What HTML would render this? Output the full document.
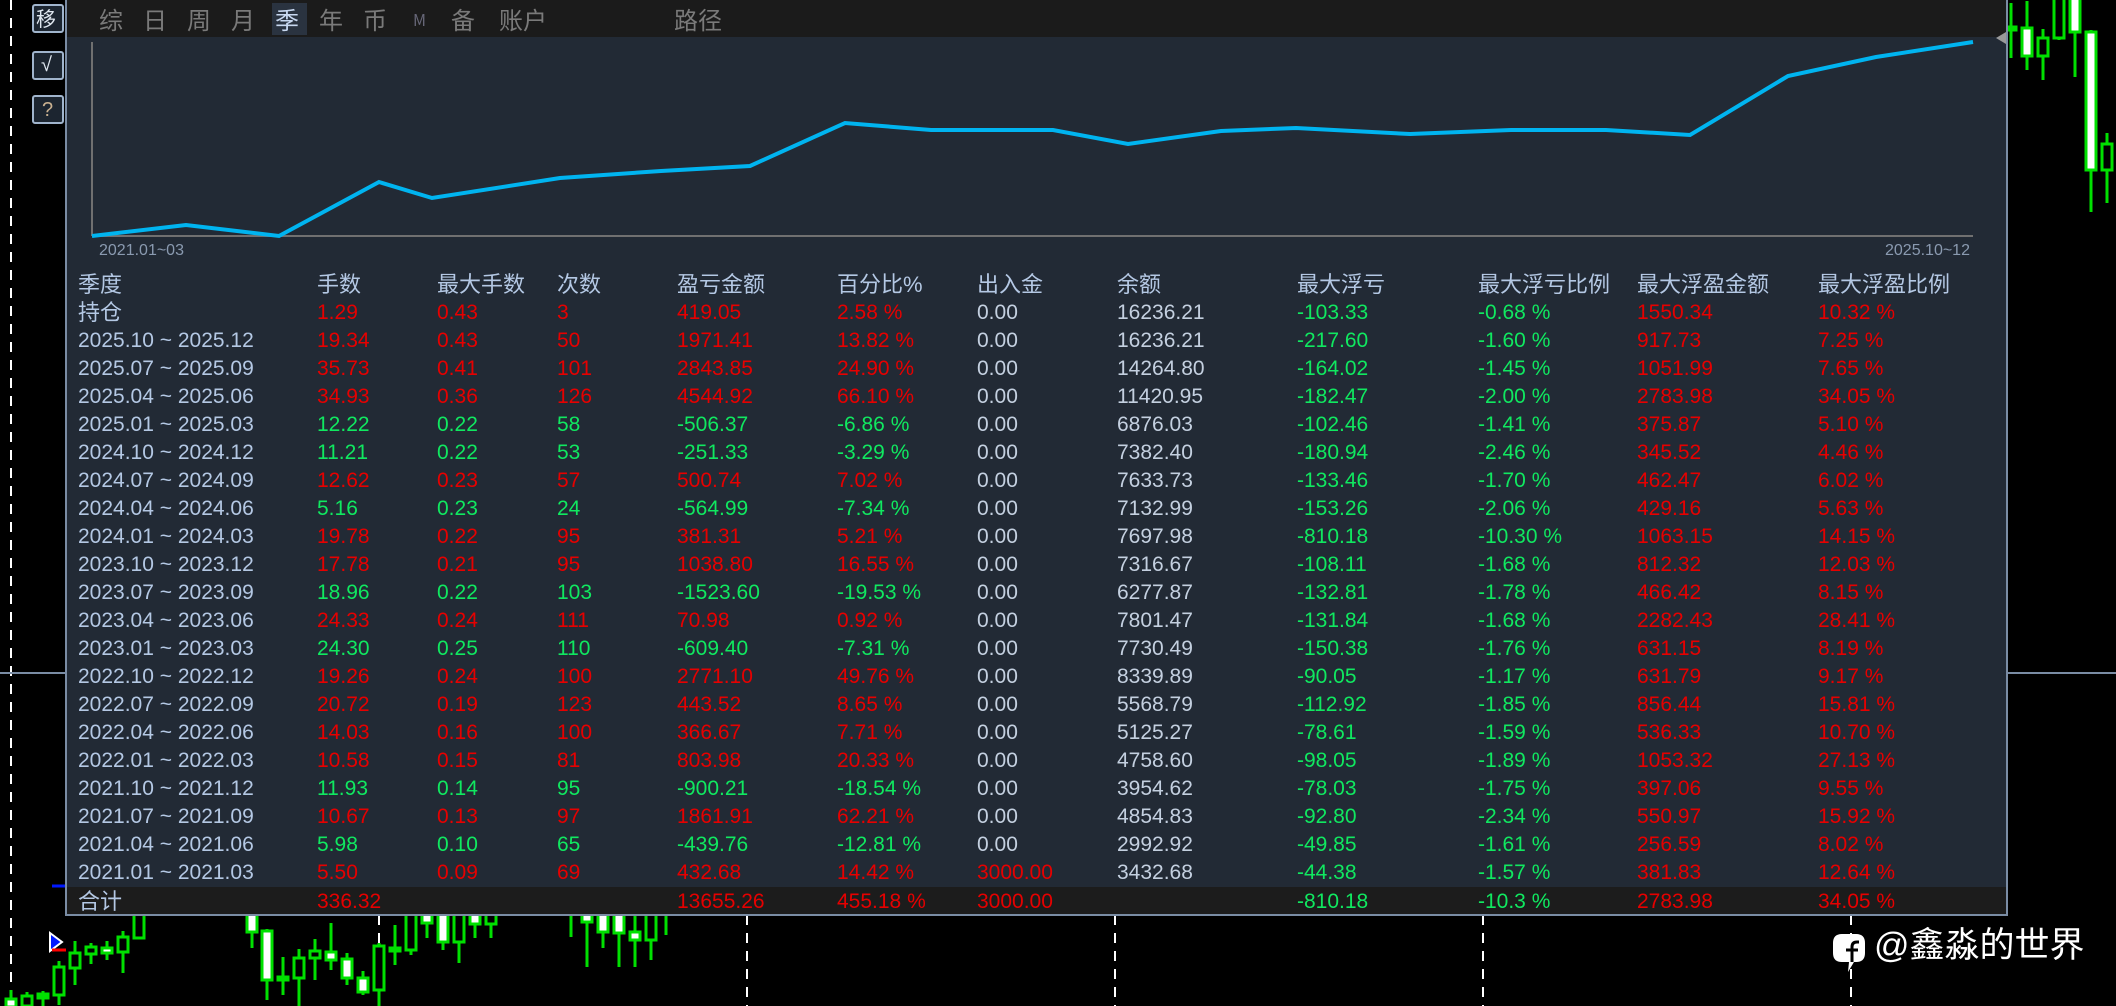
<!DOCTYPE html>
<html><head><meta charset="utf-8">
<style>
*{margin:0;padding:0;box-sizing:border-box}
body{width:2116px;height:1006px;background:#000;position:relative;overflow:hidden;font-family:"Liberation Sans","Noto Sans CJK SC",sans-serif}
.t{position:absolute;height:28px;line-height:28px;font-size:21px;white-space:nowrap}
.h{font-size:22px;color:#b4c8e4}
.l{color:#b4c8e4}
.r{color:#e60000}
.g{color:#10e860}
.w{color:#c4d0e0}
.tab{position:absolute;top:4px;font-size:24px;line-height:30px;color:#7a7a7a;font-family:"Noto Sans CJK SC",sans-serif}
</style></head><body>
<svg width="2116" height="1006" style="position:absolute;left:0;top:0">
<g stroke="#fff" stroke-width="2" stroke-dasharray="10,8">
<line x1="11" y1="0" x2="11" y2="1006"/>
<line x1="379" y1="915" x2="379" y2="1006"/>
<line x1="747" y1="915" x2="747" y2="1006"/>
<line x1="1115" y1="915" x2="1115" y2="1006"/>
<line x1="1483" y1="915" x2="1483" y2="1006"/>
<line x1="1851" y1="915" x2="1851" y2="1006"/>
</g>
<line x1="0" y1="673" x2="2116" y2="673" stroke="#7a8ca4" stroke-width="2"/>
<line x1="52" y1="886" x2="66" y2="886" stroke="#0018ff" stroke-width="3"/>
<g stroke="#00e000" stroke-width="3" fill="none">
<line x1="11" y1="990" x2="11" y2="1006"/><rect x="6" y="999" width="10" height="8" fill="#fff"/>
<line x1="27" y1="992" x2="27" y2="1006"/><rect x="22" y="996" width="10" height="10" fill="#000"/>
<line x1="43" y1="991" x2="43" y2="1006"/><rect x="38" y="994" width="10" height="4" fill="#00e000"/>
<line x1="59" y1="961" x2="59" y2="1005"/><rect x="54" y="967" width="10" height="28" fill="#000"/>
<line x1="75" y1="941" x2="75" y2="985"/><rect x="70" y="953" width="10" height="15" fill="#000"/>
<line x1="91" y1="943" x2="91" y2="964"/><rect x="86" y="947" width="10" height="7" fill="#000"/>
<line x1="107" y1="941" x2="107" y2="960"/><rect x="102" y="948" width="10" height="5" fill="#fff"/>
<line x1="123" y1="931" x2="123" y2="973"/><rect x="118" y="937" width="10" height="15" fill="#000"/>
<rect x="134" y="912" width="10" height="26" fill="#000"/>
<line x1="252" y1="915" x2="252" y2="948"/><rect x="247" y="912" width="10" height="20" fill="#fff"/>
<line x1="267" y1="929" x2="267" y2="1000"/><rect x="262" y="931" width="10" height="49" fill="#fff"/>
<line x1="283" y1="957" x2="283" y2="995"/><rect x="278" y="977" width="10" height="3" fill="#00e000"/>
<line x1="299" y1="949" x2="299" y2="1006"/><rect x="294" y="958" width="10" height="20" fill="#000"/>
<line x1="315" y1="939" x2="315" y2="980"/><rect x="310" y="951" width="10" height="7" fill="#000"/>
<line x1="331" y1="923" x2="331" y2="970"/><rect x="326" y="952" width="10" height="8" fill="#fff"/>
<line x1="347" y1="953" x2="347" y2="985"/><rect x="342" y="959" width="10" height="19" fill="#fff"/>
<line x1="363" y1="971" x2="363" y2="995"/><rect x="358" y="978" width="10" height="14" fill="#fff"/>
<line x1="379" y1="943" x2="379" y2="1006"/><rect x="374" y="946" width="10" height="44" fill="#000"/>
<line x1="395" y1="925" x2="395" y2="965"/><rect x="390" y="948" width="10" height="3" fill="#00e000"/>
<line x1="411" y1="915" x2="411" y2="955"/><rect x="406" y="912" width="10" height="38" fill="#000"/>
<line x1="427" y1="915" x2="427" y2="938"/><rect x="422" y="912" width="10" height="11" fill="#fff"/>
<line x1="443" y1="915" x2="443" y2="950"/><rect x="438" y="912" width="10" height="30" fill="#fff"/>
<line x1="459" y1="915" x2="459" y2="963"/><rect x="454" y="912" width="10" height="30" fill="#000"/>
<line x1="475" y1="915" x2="475" y2="938"/><rect x="470" y="912" width="10" height="12" fill="#fff"/>
<line x1="491" y1="915" x2="491" y2="938"/><rect x="486" y="912" width="10" height="12" fill="#000"/>
<line x1="571" y1="915" x2="571" y2="937"/>
<line x1="587" y1="915" x2="587" y2="967"/><rect x="582" y="912" width="10" height="10" fill="#fff"/>
<line x1="603" y1="915" x2="603" y2="948"/><rect x="598" y="912" width="10" height="20" fill="#fff"/>
<line x1="619" y1="915" x2="619" y2="967"/><rect x="614" y="912" width="10" height="21" fill="#fff"/>
<line x1="635" y1="915" x2="635" y2="967"/><rect x="630" y="932" width="10" height="8" fill="#fff"/>
<line x1="651" y1="915" x2="651" y2="960"/><rect x="646" y="912" width="10" height="28" fill="#000"/>
<line x1="666" y1="915" x2="666" y2="935"/>
<line x1="2011" y1="3" x2="2011" y2="58"/><rect x="2006" y="27" width="10" height="3" fill="#00e000"/>
<line x1="2027" y1="1" x2="2027" y2="70"/><rect x="2022" y="28" width="10" height="28" fill="#fff"/>
<line x1="2043" y1="29" x2="2043" y2="80"/><rect x="2038" y="38" width="10" height="18" fill="#000"/>
<line x1="2059" y1="0" x2="2059" y2="40"/><rect x="2054" y="-5" width="10" height="43" fill="#000"/>
<line x1="2075" y1="0" x2="2075" y2="77"/><rect x="2070" y="-5" width="10" height="37" fill="#fff"/>
<line x1="2091" y1="30" x2="2091" y2="212"/><rect x="2086" y="32" width="10" height="138" fill="#fff"/>
<line x1="2107" y1="133" x2="2107" y2="203"/><rect x="2102" y="144" width="10" height="26" fill="#000"/>
</g>
<path d="M50 933 L62 942 L50 951 Z" fill="#0018ff" stroke="#fff" stroke-width="2"/>
<line x1="52" y1="950" x2="66" y2="950" stroke="#f00" stroke-width="3"/>
<rect x="66" y="0" width="1941" height="915" fill="#222a35" stroke="#7a8ca4" stroke-width="2"/>
<rect x="67" y="0" width="1939" height="37" fill="#1b1b1b"/>
<rect x="67" y="887" width="1939" height="27" fill="#1c1c1c"/>
<rect x="272" y="3" width="35" height="32" fill="#2a3340"/>
<line x1="92" y1="42" x2="92" y2="236" stroke="#707070" stroke-width="2"/>
<line x1="92" y1="236" x2="1973" y2="236" stroke="#707070" stroke-width="2"/>
<polyline fill="none" stroke="#00b4f0" stroke-width="4" points="92,236 186,225 279,236 379,182 432,198 560,178 661,171 750,166 845,123 931,130 1053,130 1128,144 1221,131 1296,128 1410,134 1511,130 1606,130 1690,135 1788,76 1876,57 1973,42"/>
<path d="M2006 32 L1996 38 L2006 44 Z" fill="#999"/>
<g fill="#1c2530" stroke="#a0b4cc" stroke-width="2">
<rect x="33" y="5" width="30" height="27" rx="2"/>
<rect x="33" y="52" width="30" height="27" rx="2"/>
<rect x="33" y="96" width="30" height="27" rx="2"/>
</g>
<path d="M1842 934 H1856 Q1865 934 1865 943 V953 Q1865 962 1856 962 H1854 L1848 972 L1849 962 H1842 Q1833 962 1833 953 V943 Q1833 934 1842 934 Z" fill="#fff"/>
<path d="M1852 962 V947 Q1852 942 1857 942 H1859 M1846 950 H1858" stroke="#000" stroke-width="3" fill="none"/>
</svg>
<div class="tab" style="left:36px;top:3px;color:#e0e8f0;font-size:20px">移</div>
<div class="tab" style="left:41px;top:50px;color:#e0e8f0;font-size:20px;font-family:'Liberation Sans',sans-serif">√</div>
<div class="tab" style="left:42px;top:95px;color:#c8b090;font-size:20px;font-family:'Liberation Sans',sans-serif">?</div>
<div class="tab" style="left:99px">综</div>
<div class="tab" style="left:143px">日</div>
<div class="tab" style="left:187px">周</div>
<div class="tab" style="left:231px">月</div>
<div class="tab" style="left:275px;color:#c8d8f0">季</div>
<div class="tab" style="left:319px">年</div>
<div class="tab" style="left:363px">币</div>
<div class="tab" style="left:413px;font-size:16px;color:#667">M</div>
<div class="tab" style="left:451px">备</div>
<div class="tab" style="left:499px">账户</div>
<div class="tab" style="left:674px">路径</div>
<div class="t" style="left:99px;top:237px;font-size:16px;color:#8a9ab0">2021.01~03</div>
<div class="t" style="left:1885px;top:237px;font-size:16px;color:#8a9ab0">2025.10~12</div>
<div class="t" style="left:1874px;top:926px;font-size:35px;line-height:40px;height:40px;color:#fff">@鑫淼的世界</div>
<div id="tb"></div>
<script>
var X=[78,317,437,557,677,837,977,1117,1297,1478,1637,1818];
var H=["季度","手数","最大手数","次数","盈亏金额","百分比%","出入金","余额","最大浮亏","最大浮亏比例","最大浮盈金额","最大浮盈比例"];
var R=[
["持仓","1.29","0.43","3","419.05","2.58 %","0.00","16236.21","-103.33","-0.68 %","1550.34","10.32 %",1],
["2025.10 ~ 2025.12","19.34","0.43","50","1971.41","13.82 %","0.00","16236.21","-217.60","-1.60 %","917.73","7.25 %",1],
["2025.07 ~ 2025.09","35.73","0.41","101","2843.85","24.90 %","0.00","14264.80","-164.02","-1.45 %","1051.99","7.65 %",1],
["2025.04 ~ 2025.06","34.93","0.36","126","4544.92","66.10 %","0.00","11420.95","-182.47","-2.00 %","2783.98","34.05 %",1],
["2025.01 ~ 2025.03","12.22","0.22","58","-506.37","-6.86 %","0.00","6876.03","-102.46","-1.41 %","375.87","5.10 %",0],
["2024.10 ~ 2024.12","11.21","0.22","53","-251.33","-3.29 %","0.00","7382.40","-180.94","-2.46 %","345.52","4.46 %",0],
["2024.07 ~ 2024.09","12.62","0.23","57","500.74","7.02 %","0.00","7633.73","-133.46","-1.70 %","462.47","6.02 %",1],
["2024.04 ~ 2024.06","5.16","0.23","24","-564.99","-7.34 %","0.00","7132.99","-153.26","-2.06 %","429.16","5.63 %",0],
["2024.01 ~ 2024.03","19.78","0.22","95","381.31","5.21 %","0.00","7697.98","-810.18","-10.30 %","1063.15","14.15 %",1],
["2023.10 ~ 2023.12","17.78","0.21","95","1038.80","16.55 %","0.00","7316.67","-108.11","-1.68 %","812.32","12.03 %",1],
["2023.07 ~ 2023.09","18.96","0.22","103","-1523.60","-19.53 %","0.00","6277.87","-132.81","-1.78 %","466.42","8.15 %",0],
["2023.04 ~ 2023.06","24.33","0.24","111","70.98","0.92 %","0.00","7801.47","-131.84","-1.68 %","2282.43","28.41 %",1],
["2023.01 ~ 2023.03","24.30","0.25","110","-609.40","-7.31 %","0.00","7730.49","-150.38","-1.76 %","631.15","8.19 %",0],
["2022.10 ~ 2022.12","19.26","0.24","100","2771.10","49.76 %","0.00","8339.89","-90.05","-1.17 %","631.79","9.17 %",1],
["2022.07 ~ 2022.09","20.72","0.19","123","443.52","8.65 %","0.00","5568.79","-112.92","-1.85 %","856.44","15.81 %",1],
["2022.04 ~ 2022.06","14.03","0.16","100","366.67","7.71 %","0.00","5125.27","-78.61","-1.59 %","536.33","10.70 %",1],
["2022.01 ~ 2022.03","10.58","0.15","81","803.98","20.33 %","0.00","4758.60","-98.05","-1.89 %","1053.32","27.13 %",1],
["2021.10 ~ 2021.12","11.93","0.14","95","-900.21","-18.54 %","0.00","3954.62","-78.03","-1.75 %","397.06","9.55 %",0],
["2021.07 ~ 2021.09","10.67","0.13","97","1861.91","62.21 %","0.00","4854.83","-92.80","-2.34 %","550.97","15.92 %",1],
["2021.04 ~ 2021.06","5.98","0.10","65","-439.76","-12.81 %","0.00","2992.92","-49.85","-1.61 %","256.59","8.02 %",0],
["2021.01 ~ 2021.03","5.50","0.09","69","432.68","14.42 %","3000.00","3432.68","-44.38","-1.57 %","381.83","12.64 %",1]
];
var s="";
function d(x,y,c,t,ex){s+='<div class="t '+c+'" style="left:'+x+'px;top:'+(y-14)+'px;'+(ex||'')+'">'+t+'</div>';}
H.forEach(function(h,i){d(X[i],285,"h",h);});
R.forEach(function(r,k){
 var y=k==0?313:341+(k-1)*28;
 var sc=r[12]?"r":"g";
 d(X[0],y,"l",r[0],k==0?"font-size:22px":"");
 for(var i=1;i<=5;i++)d(X[i],y,sc,r[i]);
 d(X[6],y,r[6]=="0.00"?"w":"r",r[6]);
 d(X[7],y,"w",r[7]);
 d(X[8],y,"g",r[8]);d(X[9],y,"g",r[9]);
 d(X[10],y,"r",r[10]);d(X[11],y,"r",r[11]);
});
var y=902;
d(X[0],y,"h","合计");d(X[1],y,"r","336.32");d(X[4],y,"r","13655.26");d(X[5],y,"r","455.18 %");d(X[6],y,"r","3000.00");
d(X[8],y,"g","-810.18");d(X[9],y,"g","-10.3 %");d(X[10],y,"r","2783.98");d(X[11],y,"r","34.05 %");
document.getElementById("tb").innerHTML=s;
</script>
</body></html>
